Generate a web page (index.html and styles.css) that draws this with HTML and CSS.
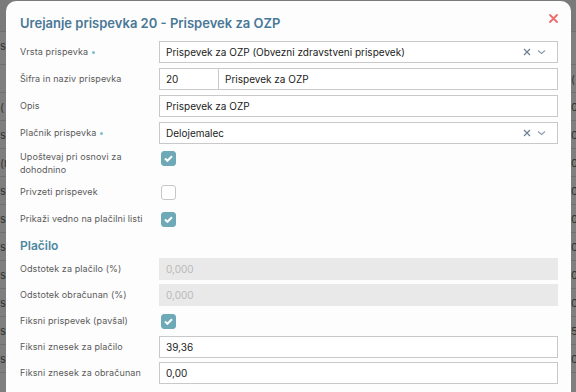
FILE: index.html
```html
<!DOCTYPE html>
<html lang="sl">
  <head>
    <meta charset="UTF-8" />
    <meta name="viewport" content="width=device-width, initial-scale=1.0" />
    <title>Urejanje prispevka</title>
    <link rel="stylesheet" href="styles.css">
  </head>
  <body>
    <div class="page">
      <div class="page-row top"><span class="cell-l"></span><span class="cell-r"></span></div>
      <div class="page-row head"><span class="cell-l">s</span><span class="cell-r"></span></div>
      <div class="page-row"><span class="cell-l"></span><span class="cell-r">(</span></div>
      <div class="page-row"><span class="cell-l">(</span><span class="cell-r">0</span></div>
      <div class="page-row"><span class="cell-l">sp</span><span class="cell-r">0</span></div>
      <div class="page-row"><span class="cell-l">(n</span><span class="cell-r">0</span></div>
      <div class="page-row"><span class="cell-l">sp</span><span class="cell-r">0</span></div>
      <div class="page-row"><span class="cell-l">sp</span><span class="cell-r">0</span></div>
      <div class="page-row"><span class="cell-l">sp</span><span class="cell-r">0(</span></div>
      <div class="page-row"><span class="cell-l">sp</span><span class="cell-r">0(</span></div>
      <div class="page-row"><span class="cell-l">sp</span><span class="cell-r">0€</span></div>
      <div class="page-row"><span class="cell-l">sp</span><span class="cell-r">5!</span></div>
      <div class="page-row"><span class="cell-l">sp</span><span class="cell-r">0,</span></div>
    </div>

    <div class="modal">
      <div class="modal-header">
        <h2 class="modal-title">Urejanje prispevka 20 - Prispevek za OZP</h2>
        <svg class="close" width="9" height="9" viewBox="0 0 9 9">
          <path d="M1 1L8 8M8 1L1 8" stroke="#ef6b6b" stroke-width="1.8" stroke-linecap="round" />
        </svg>
      </div>

      <div class="form">
        <div class="row">
          <label class="label">Vrsta prispevka<span class="req"></span></label>
          <div class="field select">
            <span class="value">Prispevek za OZP (Obvezni zdravstveni prispevek)</span>
            <svg class="clear" width="8" height="8" viewBox="0 0 8 8"><path d="M1 1L7 7M7 1L1 7" stroke="#6d7e90" stroke-width="1.2" /></svg>
            <svg class="chev" width="9" height="6" viewBox="0 0 9 6"><path d="M1 1.5L4.5 4.5L8 1.5" fill="none" stroke="#8a9cb0" stroke-width="1.1" /></svg>
          </div>
        </div>
        <div class="row">
          <label class="label">Šifra in naziv prispevka</label>
          <div class="split">
            <div class="field code"><span class="value">20</span></div>
            <div class="field"><span class="value">Prispevek za OZP</span></div>
          </div>
        </div>
        <div class="row">
          <label class="label">Opis</label>
          <div class="field"><span class="value">Prispevek za OZP</span></div>
        </div>
        <div class="row">
          <label class="label">Plačnik prispevka<span class="req"></span></label>
          <div class="field select">
            <span class="value">Delojemalec</span>
            <svg class="clear" width="8" height="8" viewBox="0 0 8 8"><path d="M1 1L7 7M7 1L1 7" stroke="#6d7e90" stroke-width="1.2" /></svg>
            <svg class="chev" width="9" height="6" viewBox="0 0 9 6"><path d="M1 1.5L4.5 4.5L8 1.5" fill="none" stroke="#8a9cb0" stroke-width="1.1" /></svg>
          </div>
        </div>
        <div class="row tall">
          <label class="label">Upoštevaj pri osnovi za<br>dohodnino</label>
          <span class="check on"><svg width="9" height="7" viewBox="0 0 9 7"><path d="M1 3.6L3.4 5.8L8 1.2" fill="none" stroke="#fff" stroke-width="2" /></svg></span>
        </div>
        <div class="row">
          <label class="label">Privzeti prispevek</label>
          <span class="check"></span>
        </div>
        <div class="row">
          <label class="label">Prikaži vedno na plačilni listi</label>
          <span class="check on"><svg width="9" height="7" viewBox="0 0 9 7"><path d="M1 3.6L3.4 5.8L8 1.2" fill="none" stroke="#fff" stroke-width="2" /></svg></span>
        </div>
      </div>

      <h3 class="section">Plačilo</h3>

      <div class="form compact">
        <div class="row">
          <label class="label">Odstotek za plačilo (%)</label>
          <div class="field disabled"><span class="value">0,000</span></div>
        </div>
        <div class="row">
          <label class="label">Odstotek obračunan (%)</label>
          <div class="field disabled"><span class="value">0,000</span></div>
        </div>
        <div class="row">
          <label class="label">Fiksni prispevek (pavšal)</label>
          <span class="check on"><svg width="9" height="7" viewBox="0 0 9 7"><path d="M1 3.6L3.4 5.8L8 1.2" fill="none" stroke="#fff" stroke-width="2" /></svg></span>
        </div>
        <div class="row">
          <label class="label">Fiksni znesek za plačilo</label>
          <div class="field"><span class="value">39,36</span></div>
        </div>
        <div class="row">
          <label class="label">Fiksni znesek za obračunan</label>
          <div class="field"><span class="value">0,00</span></div>
        </div>
      </div>
    </div>
  </body>
</html>
```

FILE: styles.css
```css
* {
  margin: 0;
  padding: 0;
  box-sizing: border-box;
}
html, body {
  height: 100%;
  overflow: hidden;
  font-family: Inter, "Noto Sans", sans-serif;
}
body {
  background: #7f7f7f;
}
.page {
  display: flex;
  flex-direction: column;
}
.page-row {
  display: grid;
  grid-template-columns: 571px 1fr;
  height: 28px;
  border-bottom: 1px solid #707070;
  font-size: 11px;
  color: #353535;
  line-height: 28px;
}
.page-row.top {
  height: 32px;
  background: #7a7a7a;
}
.page-row.head {
  height: 33px;
}
.cell-l, .cell-r {
  white-space: nowrap;
  overflow: hidden;
}
.modal {
  position: absolute;
  left: 6px;
  top: 1px;
  width: 565px;
  height: 400px;
  background: #fdfdfd;
  border-radius: 10px 10px 0 0;
  padding: 14px 13px 0 14px;
}
.modal-header {
  display: flex;
  justify-content: space-between;
  align-items: flex-start;
  margin-bottom: 10px;
}
.modal-title {
  font-size: 13px;
  line-height: 16px;
  font-weight: 600;
  color: #4a7897;
}
.close {
  margin-top: -1px;
}
.form {
  display: flex;
  flex-direction: column;
  gap: 5px;
}
.form.compact {
  gap: 4px;
}
.row {
  display: grid;
  grid-template-columns: 139px 1fr;
  align-items: center;
  min-height: 22px;
}
.row.tall {
  align-items: start;
  padding-top: 2px;
}
.label {
  font-size: 9px;
  line-height: 12.5px;
  color: #5a5a5a;
  letter-spacing: 0.1px;
}
.req {
  display: inline-block;
  width: 3px;
  height: 3px;
  border-radius: 50%;
  background: #7fbccb;
  margin-left: 4px;
  vertical-align: 1px;
}
.field {
  display: flex;
  align-items: center;
  height: 22px;
  border: 1px solid #c9c9c9;
  background: #fff;
  padding: 0 6px;
  font-size: 10px;
  color: #222;
}
.field .value {
  flex: 1;
  white-space: nowrap;
}
.select .clear {
  margin-right: 6px;
}
.select .chev {
  margin-right: 5px;
}
.split {
  display: flex;
}
.split .field {
  flex: 1;
}
.split .field.code {
  flex: 0 0 59px;
  border-right: none;
}
.field.disabled {
  background: #e9e9e9;
  border-color: #e9e9e9;
  color: #b9b9b9;
}
.check {
  display: flex;
  align-items: center;
  justify-content: center;
  width: 15px;
  height: 15px;
  margin-left: 2px;
  border-radius: 3px;
  border: 1px solid #c6c6c6;
  background: #fff;
}
.check.on {
  background: #6ea9b7;
  border-color: #6ea9b7;
}
.section {
  font-size: 12px;
  line-height: 15px;
  font-weight: 600;
  color: #4d87a1;
  margin: 8px 0 5px;
}
```
